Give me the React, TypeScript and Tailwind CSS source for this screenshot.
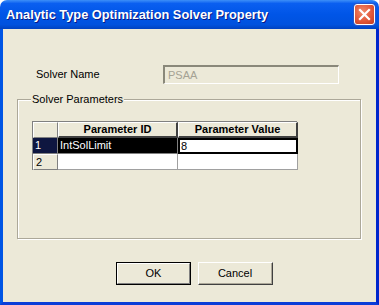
import React from 'react';

const sans = "font-['Liberation_Sans',Arial,sans-serif]";

function CloseButton() {
  return (
    <div className="w-[21px] h-[21px] rounded-[3px] border border-white bg-[radial-gradient(circle_at_40%_35%,#f08a6a_0%,#e2583a_55%,#c23b1e_100%)] flex items-center justify-center shadow-[0_0_0_1px_#2a55c8]">
      <svg width="13" height="13" viewBox="0 0 13 13">
        <path d="M2 2 L11 11 M11 2 L2 11" stroke="#ffffff" strokeWidth="2.2" strokeLinecap="square" />
      </svg>
    </div>
  );
}

function Button({ label, isDefault }: { label: string; isDefault?: boolean }) {
  if (isDefault) {
    return (
      <div className="w-[75px] h-[23px] border border-black bg-[#ece9d8]">
        <div className="h-full flex items-center justify-center text-[11px] text-black border-t border-l border-t-white border-l-white border-b border-r border-b-[#808080] border-r-[#808080]">
          {label}
        </div>
      </div>
    );
  }
  return (
    <div className="w-[75px] h-[23px] border-t border-l border-t-white border-l-white border-b border-r border-b-[#404040] border-r-[#404040] bg-[#ece9d8]">
      <div className="h-full flex items-center justify-center text-[11px] text-black border-b border-r border-b-[#aca899] border-r-[#aca899]">
        {label}
      </div>
    </div>
  );
}

export default function App() {
  return (
    <div className={`w-[379px] h-[305px] flex flex-col ${sans}`}>
      {/* title bar */}
      <div className="h-[29px] flex items-center justify-between pl-[6px] pr-[4px] rounded-t-[7px] bg-[linear-gradient(#3d8ff8_0%,#0a5ff0_12%,#0055e7_50%,#0052de_85%,#0042c0_100%)]">
        <span className="text-white font-bold text-[12.8px] [text-shadow:1px_1px_0_#0a1883]">
          Analytic Type Optimization Solver Property
        </span>
        <CloseButton />
      </div>

      {/* client */}
      <div className="flex-1 flex flex-col bg-[#ece9d8] border-l-[3px] border-r-[3px] border-b-[3px] border-l-[#0055e5] border-r-[#0026cc] border-b-[#0a3dd8] text-[11px]">
        <div className="mt-[36px] flex items-center h-[19px]">
          <span className="ml-[33px] w-[127px] text-black">Solver Name</span>
          <div className="w-[176px] h-[19px] flex items-center pl-[3px] text-[#a5a294] border-t-2 border-l-2 border-t-[#8a887a] border-l-[#8a887a] border-b border-r border-b-white border-r-white">
            PSAA
          </div>
        </div>

        {/* group box */}
        <div className="mt-[15px] ml-[14px] w-[344px] h-[140px] border border-[#aca899] shadow-[1px_1px_0_#ffffff,inset_1px_1px_0_#ffffff]">
          <div className="-mt-[7px] ml-[13px] w-fit px-[1px] bg-[#ece9d8] text-black leading-[13px]">Solver Parameters</div>
          <div className="ml-[14px] mt-[15px] w-[265px] grid grid-cols-[25px_120px_120px] grid-rows-[16px_16px_16px] border-t border-l border-[#808080] bg-[#ece9d8] leading-none">
            <div className="border-t border-l border-white border-r border-b border-r-[#808080] border-b-[#808080]" />
            <div className="flex items-center justify-center font-bold border-t border-l border-white border-r-2 border-b-2 border-r-[#404040] border-b-[#404040]">
              Parameter ID
            </div>
            <div className="flex items-center justify-center font-bold border-t border-l border-white border-r-2 border-b-2 border-r-[#404040] border-b-[#404040]">
              Parameter Value
            </div>

            <div className="flex items-center pl-[2px] bg-[#0e1640] text-white border-r border-b border-[#808080]">1</div>
            <div className="flex items-center pl-[2px] bg-black text-white border-r border-b border-[#808080]">IntSolLimit</div>
            <div className="flex items-center pl-[1px] bg-white text-[#000000] border-2 border-black">8</div>

            <div className="flex items-center pl-[2px] text-black border-t border-l border-white border-r border-b border-r-[#808080] border-b-[#808080]">2</div>
            <div className="bg-white border-r border-b border-[#a0a0a0]" />
            <div className="bg-white border-r border-b border-[#a0a0a0]" />
          </div>
        </div>

        <div className="mt-[23px] flex gap-[7px] ml-[113px]">
          <Button label="OK" isDefault />
          <Button label="Cancel" />
        </div>
      </div>
    </div>
  );
}
